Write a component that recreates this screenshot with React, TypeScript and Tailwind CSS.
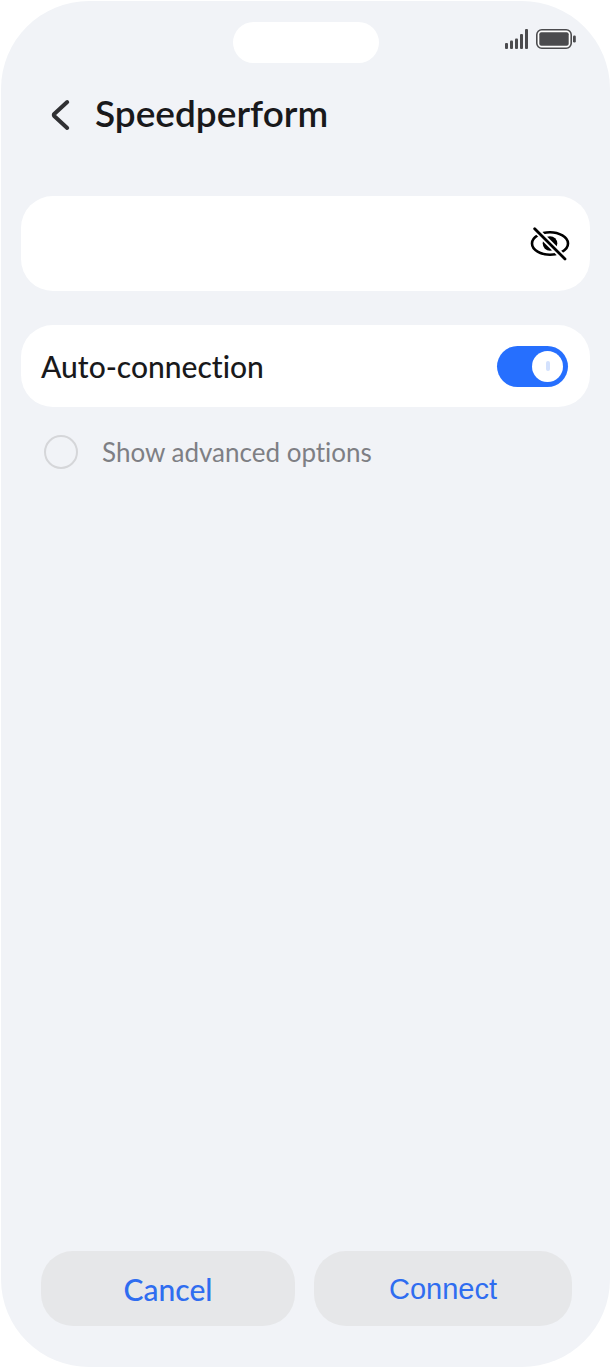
import { useState } from "react";

function SignalIcon() {
  return (
    <svg aria-hidden="true" className="h-5 w-6" viewBox="0 0 24 20" fill="#4b4b4e">
      <rect x="0" y="14" width="3" height="6" rx="1" />
      <rect x="5" y="11.5" width="3" height="8.5" rx="1" />
      <rect x="10" y="9.5" width="3" height="10.5" rx="1" />
      <rect x="15" y="5" width="3" height="15" rx="1" />
      <rect x="20" y="0" width="3" height="20" rx="1" />
    </svg>
  );
}

function BatteryIcon() {
  return (
    <svg aria-hidden="true" className="h-5 w-10" viewBox="0 0 40 20">
      <rect x="0.8" y="0.8" width="34.4" height="18.4" rx="5" fill="#fff" stroke="#4b4b4e" strokeWidth="1.6" />
      <rect x="3.3" y="3.3" width="29.4" height="13.4" rx="2" fill="#4b4b4e" />
      <rect x="37" y="6.5" width="2.8" height="7" rx="1.2" fill="#4b4b4e" />
    </svg>
  );
}

function EyeOffIcon() {
  return (
    <svg aria-hidden="true" className="h-9 w-10" viewBox="0 0 40 36" fill="none">
      <path
        d="M2 17.5C2 11 11 6.3 20 6.3S38 11 38 17.5 29 28.7 20 28.7 2 24 2 17.5Z"
        stroke="#000"
        strokeWidth="2.6"
      />
      <circle cx="20" cy="17.5" r="7.3" fill="#000" />
      <path d="M3 1 37 35" stroke="#fff" strokeWidth="6.4" />
      <path d="M4.7 2.7 35 33" stroke="#000" strokeWidth="2.8" strokeLinecap="round" />
    </svg>
  );
}

function StatusBar() {
  return (
    <div className="grid grid-cols-[1fr_auto_1fr] items-start">
      <div className="col-start-2 h-[41px] w-[146px] rounded-full bg-white" />
      <div className="flex justify-end gap-[7px] pt-[7px] pr-[34px]">
        <SignalIcon />
        <BatteryIcon />
      </div>
    </div>
  );
}

export default function App() {
  const [password, setPassword] = useState("");
  const [visible, setVisible] = useState(false);
  const [autoConnect, setAutoConnect] = useState(true);
  const [advanced, setAdvanced] = useState(false);

  return (
    <div className="flex min-h-screen bg-white p-px font-[Lato,'Noto_Sans',sans-serif] text-[#19191b] [font-variant-ligatures:none]">
      <main className="flex flex-1 flex-col rounded-[88px] bg-[#f1f3f7] pt-[21px] pb-[41px]">
        <StatusBar />

        <header className="mt-7 flex h-12 items-center pl-12">
          <button type="button" aria-label="Back" className="mr-[22px]">
            <svg className="h-8 w-6" viewBox="0 0 24 32" fill="none">
              <path
                d="M18.2 3 5.2 15a1.4 1.4 0 0 0 0 2L18.2 29"
                stroke="#303033"
                strokeWidth="4"
                strokeLinecap="round"
              />
            </svg>
          </button>
          <h1 className="pb-1 text-[37px] leading-[44px] font-semibold">Speedperform</h1>
        </header>

        <div className="mx-5 mt-[57px] flex h-[95px] items-center rounded-[32px] bg-white px-5">
          <input
            type={visible ? "text" : "password"}
            aria-label="Password"
            className="h-full min-w-0 flex-1 bg-transparent text-[30px] outline-none"
            value={password}
            onChange={(e) => setPassword(e.target.value)}
          />
          <button
            type="button"
            aria-label="Toggle password visibility"
            onClick={() => setVisible(!visible)}
          >
            <EyeOffIcon />
          </button>
        </div>

        <label className="mx-5 mt-[34px] flex h-[82px] items-center justify-between rounded-[32px] bg-white pr-[22px] pl-5">
          <span className="text-[30px] leading-9 font-medium">Auto-connection</span>
          <span className="flex h-[41px] w-[71px] items-center rounded-full bg-[#c9cbd1] p-[5px] has-checked:justify-end has-checked:bg-[#266ffe]">
            <input
              type="checkbox"
              role="switch"
              className="sr-only"
              checked={autoConnect}
              onChange={(e) => setAutoConnect(e.target.checked)}
            />
            <span className="flex size-[31px] items-center justify-center rounded-full bg-white">
              <span className="h-2.5 w-1 rounded-full bg-[#d3e1fd]" />
            </span>
          </span>
        </label>

        <label className="mt-7 flex items-center gap-6 pl-[43px] text-[26px] leading-[34px] text-[#7e7f84]">
          <input
            type="checkbox"
            className="size-[34px] appearance-none rounded-full border-2 border-[#d5d6d9] checked:border-8 checked:border-[#266ffe]"
            checked={advanced}
            onChange={(e) => setAdvanced(e.target.checked)}
          />
          Show advanced options
        </label>

        <div className="mt-auto grid grid-cols-[254fr_258fr] gap-[19px] pr-[38px] pl-10 leading-9 text-[#2f6df0]">
          <button type="button" className="h-[75px] rounded-[32px] bg-[#e6e7e9] text-[30px] font-medium">
            Cancel
          </button>
          <button
            type="button"
            className="h-[75px] rounded-[32px] bg-[#e6e7e9] font-['Liberation_Sans',Arial,sans-serif] text-[29px]"
          >
            Connect
          </button>
        </div>
      </main>
    </div>
  );
}
